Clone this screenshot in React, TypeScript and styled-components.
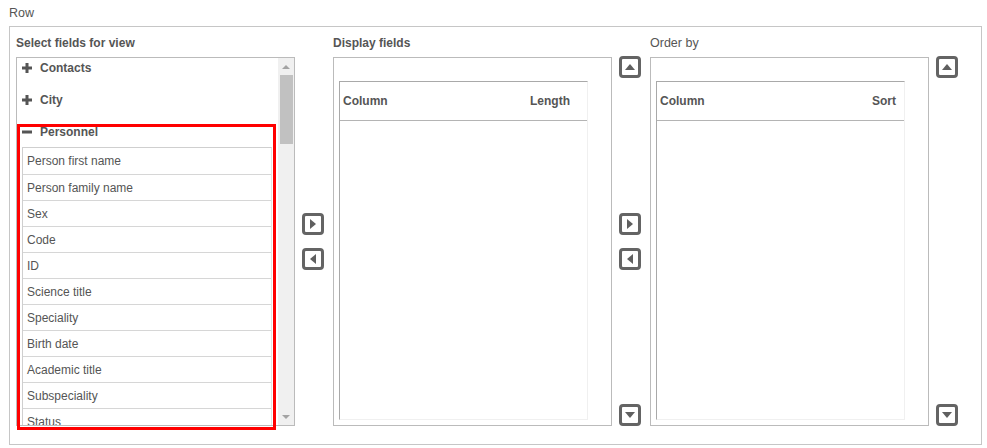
import React from 'react';
import styled, { createGlobalStyle } from 'styled-components';

const GlobalStyle = createGlobalStyle`
  html, body {
    margin: 0;
    padding: 0;
    background: #fff;
  }
  body {
    font-family: 'Liberation Sans', Arial, sans-serif;
    font-size: 12px;
    color: #555;
  }
`;

const Page = styled.div`
  padding: 5px 0 0 9px;
`;

const Title = styled.div`
  height: 14px;
  line-height: 14px;
  margin-bottom: 7px;
  font-size: 12.5px;
  padding-top: 1px;
`;

const Fieldset = styled.div`
  width: 973px;
  border: 1px solid #c6c6c6;
  padding: 9px 0 18px 6px;
  box-sizing: border-box;
  display: grid;
  grid-template-columns: 279px 38px 279px 38px 279px 38px;
  grid-template-rows: 14px 369px;
  row-gap: 7px;
  margin-top: -1px;
`;

const Label = styled.div<{ bold?: boolean; col: number }>`
  grid-row: 1;
  grid-column: ${p => p.col};
  line-height: 14px;
  font-weight: ${p => (p.bold ? 700 : 400)};
  font-size: ${p => (p.bold ? '12px' : '12.5px')};
  white-space: nowrap;
`;

const ListWrap = styled.div`
  grid-row: 2;
  grid-column: 1;
  position: relative;
`;

const ListBox = styled.div`
  height: 100%;
  box-sizing: border-box;
  border: 1px solid #bbb;
  display: flex;
  overflow: hidden;
`;

const ListContent = styled.div`
  flex: 1;
  padding: 0 6px 0 5px;
  overflow: hidden;
`;

const GroupHeader = styled.div<{ open?: boolean }>`
  height: 19px;
  display: flex;
  align-items: center;
  gap: 8px;
  font-weight: 700;
  margin-bottom: ${p => (p.open ? '6px' : '13px')};
`;

const FieldTable = styled.div`
  border: 1px solid #cfcfcf;
  border-right-color: #e4e4e4;
`;

const FieldRow = styled.div`
  height: 23px;
  line-height: 23px;
  padding: 2px 0 0 4px;
  border-top: 1px solid #d6d6d6;
  white-space: nowrap;
  &:first-child {
    border-top: none;
    height: 24px;
  }
`;

const ScrollTrack = styled.div`
  width: 16px;
  background: #f0f0f0;
  display: flex;
  flex-direction: column;
  align-items: center;
`;

const ScrollArrow = styled.div<{ down?: boolean }>`
  height: 17px;
  width: 16px;
  display: flex;
  align-items: center;
  justify-content: center;
  &::after {
    content: '';
    border-left: 4px solid transparent;
    border-right: 4px solid transparent;
    ${p =>
      p.down
        ? 'border-top: 4px solid #a3a3a3;'
        : 'border-bottom: 4px solid #a3a3a3;'}
  }
`;

const ScrollThumb = styled.div`
  width: 13px;
  height: 69px;
  background: #c1c1c1;
`;

const ScrollSpacer = styled.div`
  flex: 1;
`;

const Highlight = styled.div`
  position: absolute;
  left: 1px;
  top: 67px;
  width: 259px;
  height: 306px;
  box-sizing: border-box;
  border: 3px solid #ff0000;
  pointer-events: none;
`;

const Panel = styled.div<{ col: number }>`
  grid-row: 2;
  grid-column: ${p => p.col};
  border: 1px solid #bbb;
  box-sizing: border-box;
  padding: 23px 23px 5px 5px;
  display: flex;
`;

const GridTable = styled.div`
  flex: 1;
  border-top: 1px solid #a9a9a9;
  border-left: 1px solid #a9a9a9;
  border-right: 1px solid #f0f0f0;
  border-bottom: 1px solid #f0f0f0;
`;

const GridHeader = styled.div<{ endPad: number }>`
  height: 38px;
  border-bottom: 1px solid #b4b4b4;
  display: flex;
  align-items: center;
  justify-content: space-between;
  padding: 0 ${p => p.endPad}px 0 3px;
  font-weight: 700;
`;

const ButtonColumn = styled.div<{ col: number; spread?: boolean }>`
  grid-row: 2;
  grid-column: ${p => p.col};
  display: flex;
  flex-direction: column;
  align-items: center;
  justify-content: ${p => (p.spread ? 'space-between' : 'center')};
  padding-right: 2px;
  margin-top: -1px;
`;

const MiddlePair = styled.div`
  display: flex;
  flex-direction: column;
  gap: 13px;
`;

const ArrowButton = styled.button`
  width: 22px;
  height: 22px;
  padding: 0;
  box-sizing: border-box;
  border: 3px solid #646464;
  border-radius: 4px;
  background: #fff;
  display: flex;
  align-items: center;
  justify-content: center;
  cursor: pointer;
`;

type Dir = 'up' | 'down' | 'left' | 'right';

const Arrow: React.FC<{ dir: Dir }> = ({ dir }) => {
  const pts: Record<Dir, string> = {
    up: '1,9 6,3 11,9',
    down: '1,3 6,9 11,3',
    right: '3,1 9,6 3,11',
    left: '9,1 3,6 9,11',
  };
  return (
    <ArrowButton>
      <svg width="12" height="12" viewBox="0 0 12 12">
        <polygon points={pts[dir]} fill="#5f5f5f" />
      </svg>
    </ArrowButton>
  );
};

const Sign: React.FC<{ minus?: boolean }> = ({ minus }) => (
  <svg width="10" height="10" viewBox="0 0 10 10">
    <rect x="0" y="3.5" width="10" height="3" fill="#555" />
    {!minus && <rect x="3.5" y="0" width="3" height="10" fill="#555" />}
  </svg>
);

const fields = [
  'Person first name',
  'Person family name',
  'Sex',
  'Code',
  'ID',
  'Science title',
  'Speciality',
  'Birth date',
  'Academic title',
  'Subspeciality',
  'Status',
];

const App: React.FC = () => (
  <>
    <GlobalStyle />
    <Page>
      <Title>Row</Title>
      <Fieldset>
        <Label col={1} bold>Select fields for view</Label>
        <Label col={3} bold>Display fields</Label>
        <Label col={5}>Order by</Label>

        <ListWrap>
          <ListBox>
            <ListContent>
              <GroupHeader><Sign /> Contacts</GroupHeader>
              <GroupHeader><Sign /> City</GroupHeader>
              <GroupHeader open><Sign minus /> Personnel</GroupHeader>
              <FieldTable>
                {fields.map(f => (
                  <FieldRow key={f}>{f}</FieldRow>
                ))}
              </FieldTable>
            </ListContent>
            <ScrollTrack>
              <ScrollArrow />
              <ScrollThumb />
              <ScrollSpacer />
              <ScrollArrow down />
            </ScrollTrack>
          </ListBox>
          <Highlight />
        </ListWrap>

        <ButtonColumn col={2}>
          <MiddlePair>
            <Arrow dir="right" />
            <Arrow dir="left" />
          </MiddlePair>
        </ButtonColumn>

        <Panel col={3}>
          <GridTable>
            <GridHeader endPad={17}>
              <span>Column</span>
              <span>Length</span>
            </GridHeader>
          </GridTable>
        </Panel>

        <ButtonColumn col={4} spread>
          <Arrow dir="up" />
          <MiddlePair>
            <Arrow dir="right" />
            <Arrow dir="left" />
          </MiddlePair>
          <Arrow dir="down" />
        </ButtonColumn>

        <Panel col={5}>
          <GridTable>
            <GridHeader endPad={8}>
              <span>Column</span>
              <span>Sort</span>
            </GridHeader>
          </GridTable>
        </Panel>

        <ButtonColumn col={6} spread>
          <Arrow dir="up" />
          <Arrow dir="down" />
        </ButtonColumn>
      </Fieldset>
    </Page>
  </>
);

export default App;
